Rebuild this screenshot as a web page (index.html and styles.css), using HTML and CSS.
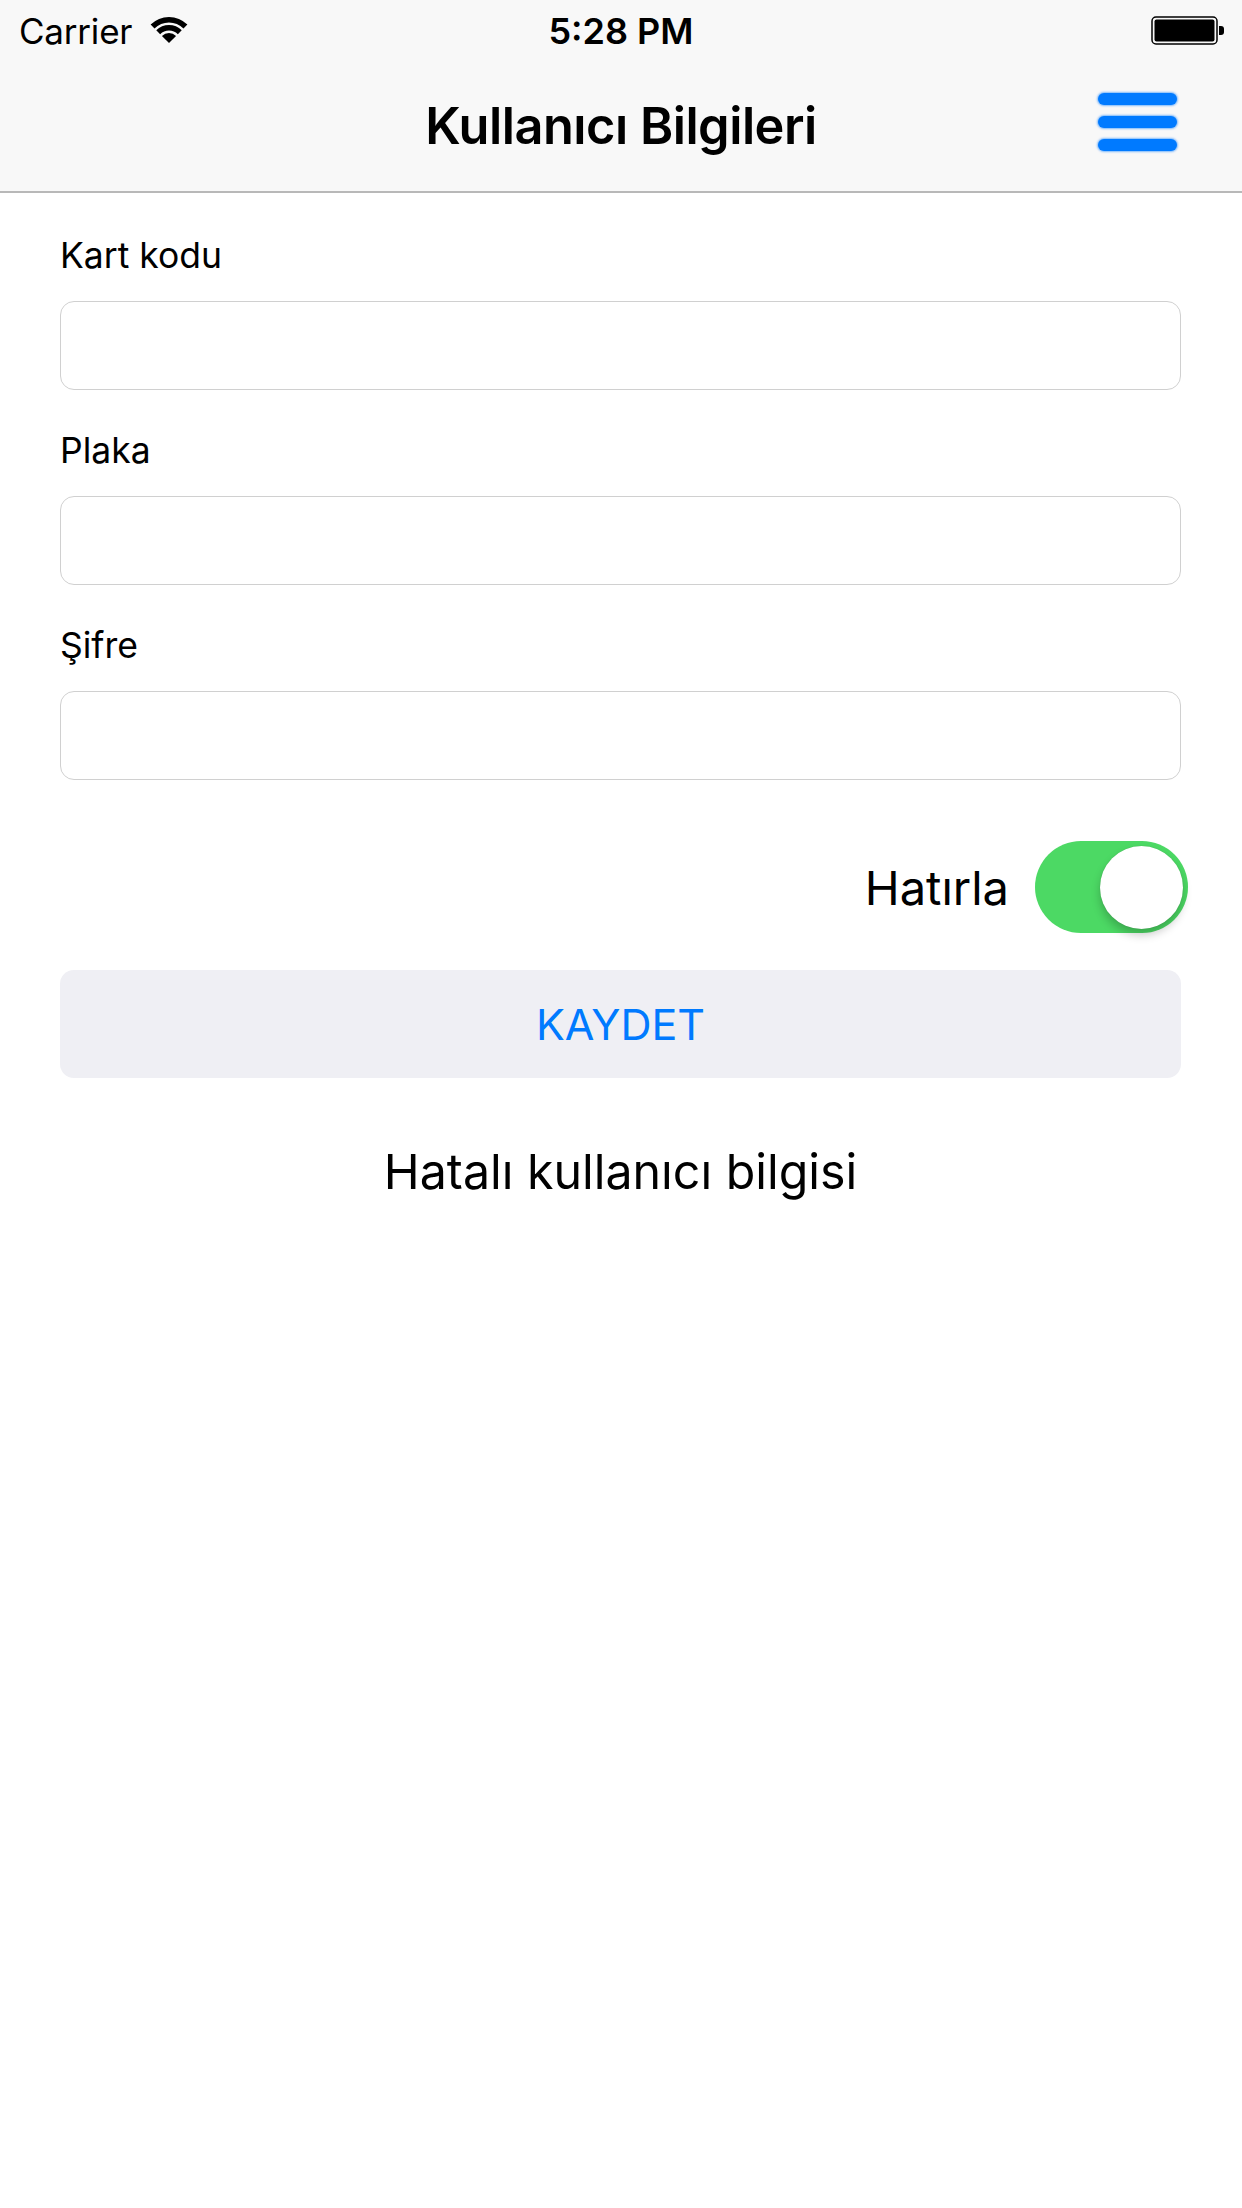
FILE: index.html
```html
<!DOCTYPE html>
<html lang="tr">
<head>
  <meta charset="UTF-8" />
  <meta name="viewport" content="width=device-width, initial-scale=1.0"/>
  <title>Kullanıcı Bilgileri</title>
  <link rel="stylesheet" href="styles.css">
</head>
<body>
  <div class="statusbar">
    <div class="carrier">
      Carrier
      <svg class="wifi" width="38" height="29" viewBox="0 0 38 29">
        <path d="M0.62 9.62 A26 26 0 0 1 37.38 9.62 L33.5 13.5 A20.5 20.5 0 0 0 4.5 13.5 Z"/>
        <path d="M6.27 15.27 A18 18 0 0 1 31.73 15.27 L27.84 19.16 A12.5 12.5 0 0 0 10.16 19.16 Z"/>
        <path d="M11.93 20.93 A10 10 0 0 1 26.07 20.93 L19 28 Z"/>
      </svg>
    </div>
    <div class="clock">5:28 PM</div>
    <svg class="battery" width="74" height="30" viewBox="0 0 74 30">
      <rect x="1" y="1" width="65" height="27" rx="4" fill="none" stroke="#000" stroke-width="1.5"/>
      <rect x="3.5" y="3.5" width="60" height="22" rx="2" fill="#000"/>
      <path d="M68 10 h2 a3 3 0 0 1 3 3 v3 a3 3 0 0 1 -3 3 h-2 Z" fill="#000"/>
    </svg>
  </div>

  <div class="navbar">
    <h1 class="title">Kullanıcı Bilgileri</h1>
    <button class="menu-btn" aria-label="Menü">
      <span></span><span></span><span></span>
    </button>
  </div>

  <div class="form">
    <div class="field">
      <label>Kart kodu</label>
      <input type="text">
    </div>
    <div class="field">
      <label>Plaka</label>
      <input type="text">
    </div>
    <div class="field">
      <label>Şifre</label>
      <input type="password">
    </div>

    <div class="remember">
      <span>Hatırla</span>
      <div class="switch on"><div class="knob"></div></div>
    </div>

    <button class="save-btn">KAYDET</button>

    <div class="error">Hatalı kullanıcı bilgisi</div>
  </div>
</body>
</html>
```

FILE: styles.css
```css
body {
  font-family: Inter, "Noto Sans", sans-serif;
  background: #fff;
  color: #000;
  margin: 0;
  padding: 0;
  width: 1242px;
}
.statusbar {
  height: 60px;
  background: #f8f8f8;
  display: flex;
  align-items: center;
  justify-content: space-between;
  padding: 0 17px 0 19px;
  box-sizing: border-box;
  position: relative;
  font-size: 35px;
}
.carrier {
  display: flex;
  align-items: center;
  gap: 18px;
  letter-spacing: -0.2px;
  padding-top: 2px;
}
.wifi {
  fill: #000;
  margin-top: -4px;
}
.clock {
  position: absolute;
  left: 0;
  right: 0;
  padding-top: 2px;
  text-align: center;
  font-size: 36px;
  font-weight: 600;
  pointer-events: none;
}
.battery {
  margin-top: 2px;
}
.navbar {
  height: 131px;
  background: #f8f8f8;
  border-bottom: 2px solid #b8b8b8;
  display: flex;
  align-items: center;
  justify-content: center;
  position: relative;
}
.title {
  margin: 0;
  font-size: 50.5px;
  font-weight: 600;
  letter-spacing: -0.5px;
}
.menu-btn {
  position: absolute;
  right: 65px;
  top: 33px;
  width: 79px;
  padding: 0;
  border: none;
  background: none;
  display: flex;
  flex-direction: column;
  gap: 11px;
}
.menu-btn span {
  display: block;
  height: 12px;
  border-radius: 6px;
  background: #007aff;
  box-shadow: 0 0 2px 1px rgba(0, 122, 255, 0.5);
}
.form {
  padding: 43px 61px 0 60px;
}
.field {
  margin-bottom: 41px;
}
.field label {
  display: block;
  font-size: 35.5px;
  line-height: 40px;
}
.field input {
  display: block;
  width: 100%;
  height: 89px;
  margin-top: 25px;
  box-sizing: border-box;
  border: 1.5px solid #d0d0d0;
  border-radius: 14px;
  background: #fff;
  outline: none;
  font-size: 34px;
  padding: 0 16px;
}
.remember {
  display: flex;
  align-items: center;
  justify-content: flex-end;
  gap: 26px;
  margin-top: 61px;
  margin-right: -7px;
  font-size: 47px;
}
.switch {
  width: 153px;
  height: 92px;
  border-radius: 46px;
  background: #4cd964;
  display: flex;
  align-items: center;
  justify-content: flex-end;
  padding: 0 5px;
  box-sizing: border-box;
}
.knob {
  width: 83px;
  height: 83px;
  border-radius: 50%;
  background: #fff;
  box-shadow: 0 6px 10px rgba(0, 0, 0, 0.22), 0 0 1px rgba(0, 0, 0, 0.2);
}
.save-btn {
  display: block;
  width: 100%;
  height: 108px;
  margin-top: 37px;
  border: none;
  border-radius: 14px;
  background: #efeff4;
  color: #007aff;
  font-family: inherit;
  font-size: 43px;
}
.error {
  margin-top: 64px;
  text-align: center;
  font-size: 48.3px;
  line-height: 60px;
}
```
